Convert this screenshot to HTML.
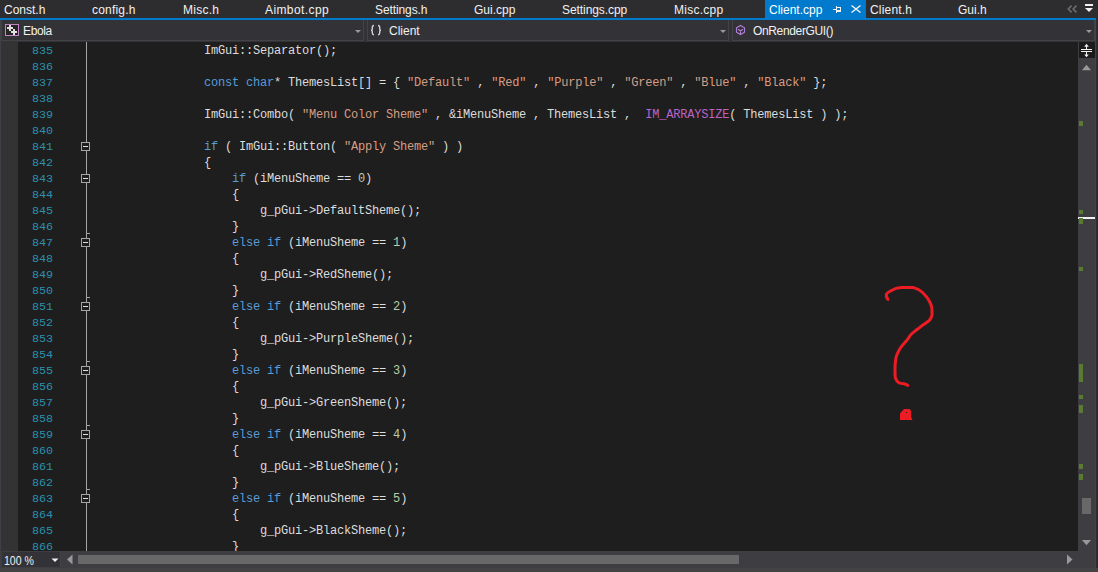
<!DOCTYPE html>
<html><head><meta charset="utf-8"><style>
*{margin:0;padding:0;box-sizing:border-box}
html,body{width:1098px;height:572px;overflow:hidden;background:#2d2d30}
body{position:relative;font-family:"Liberation Sans",sans-serif}
.a{position:absolute}
.tab{position:absolute;top:3px;font-size:12px;line-height:14px;color:#f1f1f1;white-space:pre}
.dd{position:absolute;top:20px;height:21px;background:#333337;border:1px solid #434346;border-top:none}
.ddt{position:absolute;top:4px;font-size:12px;line-height:14px;color:#f1f1f1;white-space:pre;letter-spacing:-0.35px}
.arr{position:absolute;width:0;height:0;border-left:3.5px solid transparent;border-right:3.5px solid transparent;border-top:3.5px solid #999}
#ed{position:absolute;left:0;top:42px;width:1078px;height:509px;background:#1e1e1e;overflow:hidden}
#gmg{position:absolute;left:0;top:0;width:18px;height:509px;background:#333333;border-left:1px solid #3f3f46}
.ln{position:absolute;left:0;height:16px;line-height:16px;font-family:"Liberation Mono",monospace;font-size:12px;letter-spacing:-0.2px;white-space:pre;color:#dcdcdc}
#code{position:absolute;left:92px;top:0}
#nums{position:absolute;left:32px;top:0;color:#2b91af}
#nums .ln{color:#2b91af;font-size:11.7px;letter-spacing:-0.02px}
#ovl{position:absolute;left:86px;top:0;width:1px;height:509px;background:#a5a5a5}
.ob{position:absolute;left:81px;width:9px;height:9px;border:1px solid #a5a5a5;background:#1e1e1e}
.ob::after{content:"";position:absolute;left:1px;top:3px;width:5px;height:1px;background:#e0e0e0}
.ot{position:absolute;left:86px;width:4px;height:1px;background:#a5a5a5}
#vs{position:absolute;left:1078px;top:42px;width:17px;height:509px;background:#3e3e42}
.gm{position:absolute;left:1px;width:4px;background:#597b31}
#hs{position:absolute;left:0;top:551px;width:1095px;height:17px;background:#3e3e42}
</style></head><body>
<div class="tab" style="left:4px;letter-spacing:0px">Const.h</div><div class="tab" style="left:92px;letter-spacing:0.2px">config.h</div><div class="tab" style="left:183px;letter-spacing:0.25px">Misc.h</div><div class="tab" style="left:265px;letter-spacing:0.4px">Aimbot.cpp</div><div class="tab" style="left:375px;letter-spacing:-0.1px">Settings.h</div><div class="tab" style="left:474px;letter-spacing:0px">Gui.cpp</div><div class="tab" style="left:562px;letter-spacing:-0.07px">Settings.cpp</div><div class="tab" style="left:674px;letter-spacing:0.25px">Misc.cpp</div><div class="tab" style="left:870px;letter-spacing:0.18px">Client.h</div><div class="tab" style="left:958px;letter-spacing:0px">Gui.h</div>
<div class="a" style="left:765px;top:0;width:101px;height:18px;background:#007acc"></div>
<div class="tab" style="left:769px;color:#fff">Client.cpp</div>
<svg class="a" style="left:0;top:0" width="1098" height="42">
 <g fill="#f1f1f1">
  <rect x="833" y="9" width="3" height="1"/><rect x="836" y="6" width="1" height="7"/>
  <rect x="837" y="7" width="4" height="1"/><rect x="837" y="10" width="4" height="2"/><rect x="840" y="7" width="1" height="4"/>
 </g>
 <path d="M851.5,5.5 L860.5,12.5 M860.5,5.5 L851.5,12.5" stroke="#f1f1f1" stroke-width="1.5"/>
 <path d="M1071.6,5.6 L1068.2,9 L1071.6,12.4 M1076.5,5.6 L1073.1,9 L1076.5,12.4" stroke="#6e6e6e" stroke-width="1.5" fill="none"/>
 <rect x="1085" y="4" width="8" height="2" fill="#f1f1f1"/>
 <path d="M1085,8 L1093,8 L1089,12 Z" fill="#f1f1f1"/>
</svg>
<div class="a" style="left:0;top:18px;width:1096px;height:2px;background:#007acc"></div>
<div class="a" style="left:0;top:20px;width:1096px;height:22px;background:#333337"></div>
<div class="dd" style="left:1px;width:363px"><div class="ddt" style="left:21px">Ebola</div><div class="arr" style="left:353px;top:10px"></div></div>
<div class="a" style="left:0;top:20px;width:1px;height:22px;background:#3f3f46"></div>
<div class="dd" style="left:367px;width:362px"><div class="ddt" style="left:21px;letter-spacing:0">Client</div><div class="arr" style="left:352px;top:10px"></div></div>
<div class="dd" style="left:732px;width:363px"><div class="ddt" style="left:20px">OnRenderGUI()</div><div class="arr" style="left:353px;top:10px"></div></div>
<div class="a" style="left:1095px;top:20px;width:1px;height:548px;background:#434346"></div>
<div class="a" style="left:0;top:568px;width:1098px;height:4px;background:#434346"></div>
<svg class="a" style="left:0;top:0" width="1098" height="42">
 <rect x="5.5" y="24.5" width="13" height="11" fill="#252526" stroke="#c586c8" stroke-width="1"/>
 <g fill="#e0e0e0">
  <rect x="9" y="25" width="2" height="6"/><rect x="7" y="27" width="6" height="2"/>
  <rect x="13" y="29" width="2" height="6"/><rect x="11" y="31" width="6" height="2"/>
 </g>
 <path d="M374,25.5 C372.5,25.5 372.3,26.5 372.3,27.5 L372.3,29 C372.3,29.8 371.8,30.2 371,30.2 C371.8,30.2 372.3,30.6 372.3,31.4 L372.3,33 C372.3,34 372.5,34.7 374,34.7 M378,25.5 C379.5,25.5 379.7,26.5 379.7,27.5 L379.7,29 C379.7,29.8 380.2,30.2 381,30.2 C380.2,30.2 379.7,30.6 379.7,31.4 L379.7,33 C379.7,34 379.5,34.7 378,34.7" stroke="#d0d0d0" stroke-width="1.4" fill="none"/>
 <g stroke="#b180d7" stroke-width="1.1" fill="none">
  <path d="M740.5,25.5 L744.5,27.8 L744.5,32.2 L740.5,34.5 L736.5,32.2 L736.5,27.8 Z"/>
  <path d="M738,29.3 L740.5,30.8 L743,29.3 M740.5,30.8 L740.5,34"/>
 </g>
</svg>
<div id="ed">
<div id="gmg"></div>
<div id="nums"><div class="ln" style="top:1px">835</div><div class="ln" style="top:17px">836</div><div class="ln" style="top:33px">837</div><div class="ln" style="top:49px">838</div><div class="ln" style="top:65px">839</div><div class="ln" style="top:81px">840</div><div class="ln" style="top:97px">841</div><div class="ln" style="top:113px">842</div><div class="ln" style="top:129px">843</div><div class="ln" style="top:145px">844</div><div class="ln" style="top:161px">845</div><div class="ln" style="top:177px">846</div><div class="ln" style="top:193px">847</div><div class="ln" style="top:209px">848</div><div class="ln" style="top:225px">849</div><div class="ln" style="top:241px">850</div><div class="ln" style="top:257px">851</div><div class="ln" style="top:273px">852</div><div class="ln" style="top:289px">853</div><div class="ln" style="top:305px">854</div><div class="ln" style="top:321px">855</div><div class="ln" style="top:337px">856</div><div class="ln" style="top:353px">857</div><div class="ln" style="top:369px">858</div><div class="ln" style="top:385px">859</div><div class="ln" style="top:401px">860</div><div class="ln" style="top:417px">861</div><div class="ln" style="top:433px">862</div><div class="ln" style="top:449px">863</div><div class="ln" style="top:465px">864</div><div class="ln" style="top:481px">865</div><div class="ln" style="top:497px">866</div></div>
<div id="ovl"></div>
<div><div class="ob" style="top:100px"></div><div class="ob" style="top:132px"></div><div class="ob" style="top:196px"></div><div class="ob" style="top:260px"></div><div class="ob" style="top:324px"></div><div class="ob" style="top:388px"></div><div class="ob" style="top:452px"></div><div class="ot" style="top:191px"></div><div class="ot" style="top:255px"></div><div class="ot" style="top:319px"></div><div class="ot" style="top:383px"></div><div class="ot" style="top:447px"></div></div>
<div id="code"><div class="ln" style="top:1px">                ImGui::Separator();</div><div class="ln" style="top:17px"></div><div class="ln" style="top:33px">                <span style="color:#569cd6">const</span> <span style="color:#569cd6">char</span>* ThemesList[] = { <span style="color:#d69d85">"Default"</span> , <span style="color:#d69d85">"Red"</span> , <span style="color:#d69d85">"Purple"</span> , <span style="color:#d69d85">"Green"</span> , <span style="color:#d69d85">"Blue"</span> , <span style="color:#d69d85">"Black"</span> };</div><div class="ln" style="top:49px"></div><div class="ln" style="top:65px">                ImGui::Combo( <span style="color:#d69d85">"Menu Color Sheme"</span> , &amp;iMenuSheme , ThemesList ,  <span style="color:#bd63c5">IM_ARRAYSIZE</span>( ThemesList ) );</div><div class="ln" style="top:81px"></div><div class="ln" style="top:97px">                <span style="color:#569cd6">if</span> ( ImGui::Button( <span style="color:#d69d85">"Apply Sheme"</span> ) )</div><div class="ln" style="top:113px">                {</div><div class="ln" style="top:129px">                    <span style="color:#569cd6">if</span> (iMenuSheme == <span style="color:#b5cea8">0</span>)</div><div class="ln" style="top:145px">                    {</div><div class="ln" style="top:161px">                        g_pGui-&gt;DefaultSheme();</div><div class="ln" style="top:177px">                    }</div><div class="ln" style="top:193px">                    <span style="color:#569cd6">else</span> <span style="color:#569cd6">if</span> (iMenuSheme == <span style="color:#b5cea8">1</span>)</div><div class="ln" style="top:209px">                    {</div><div class="ln" style="top:225px">                        g_pGui-&gt;RedSheme();</div><div class="ln" style="top:241px">                    }</div><div class="ln" style="top:257px">                    <span style="color:#569cd6">else</span> <span style="color:#569cd6">if</span> (iMenuSheme == <span style="color:#b5cea8">2</span>)</div><div class="ln" style="top:273px">                    {</div><div class="ln" style="top:289px">                        g_pGui-&gt;PurpleSheme();</div><div class="ln" style="top:305px">                    }</div><div class="ln" style="top:321px">                    <span style="color:#569cd6">else</span> <span style="color:#569cd6">if</span> (iMenuSheme == <span style="color:#b5cea8">3</span>)</div><div class="ln" style="top:337px">                    {</div><div class="ln" style="top:353px">                        g_pGui-&gt;GreenSheme();</div><div class="ln" style="top:369px">                    }</div><div class="ln" style="top:385px">                    <span style="color:#569cd6">else</span> <span style="color:#569cd6">if</span> (iMenuSheme == <span style="color:#b5cea8">4</span>)</div><div class="ln" style="top:401px">                    {</div><div class="ln" style="top:417px">                        g_pGui-&gt;BlueSheme();</div><div class="ln" style="top:433px">                    }</div><div class="ln" style="top:449px">                    <span style="color:#569cd6">else</span> <span style="color:#569cd6">if</span> (iMenuSheme == <span style="color:#b5cea8">5</span>)</div><div class="ln" style="top:465px">                    {</div><div class="ln" style="top:481px">                        g_pGui-&gt;BlackSheme();</div><div class="ln" style="top:497px">                    }</div></div>
<svg class="a" style="left:0;top:-42px" width="1078" height="600">
 <path transform="translate(0,0.5)" d="M888,298.8 C886.5,297.5 886,296 886.5,293.5 C887.5,292 889,291.2 890.5,290.5 C893,289 897,287.2 901,287.1 L913.6,287.1 C917,288 920,289.5 922,291.5 C925,294.5 927,296.5 928.3,298.9 C930.5,302.5 932,305 932,309 L932,314.6 C931.5,317 930.5,318.5 929.3,319.9 C927,322 924.5,323.5 922,325.1 C920,326.8 918.5,328 916.7,329.3 C914.8,330.8 913,332 911.5,333.5 C910,335 908.7,337.3 907.4,339.1 C905,342 902,345 899.9,348.3 C897.8,352 896.3,355 895.8,358.2 C895.2,362 895,365 895,368.2 C895,372 895,375 895.3,377.3 C896,379.5 897.5,381.5 899.1,382.3 C901,383 903,383.2 904.9,383.5 L907.9,384.8" stroke="#ed1c24" stroke-width="3" fill="none" stroke-linecap="round" stroke-linejoin="round"/>
 <path d="M900,413.5 L904,409 L909.5,409 L911.2,411 L911.2,417.5 L912.2,419 L912.2,420 L900,420 Z" fill="#ed1c24"/>
 <rect x="906" y="412" width="1" height="1" fill="#1e1e1e"/>
</svg>
</div>
<div id="vs">
 <div class="a" style="left:1px;top:0;width:16px;height:16px;background:#1b1b1c"></div>
 <div class="a" style="left:0;top:175px;width:17px;height:2px;background:#f1f1f1"></div>
<div class="gm" style="top:79px;height:5px"></div><div class="gm" style="top:168px;height:4px"></div><div class="gm" style="top:176px;height:6px"></div><div class="gm" style="top:225px;height:4px"></div><div class="gm" style="top:322px;height:18px"></div><div class="gm" style="top:353px;height:4px"></div><div class="gm" style="top:363px;height:8px"></div><div class="gm" style="top:422px;height:5px"></div><div class="gm" style="top:432px;height:6px"></div>
 <div class="a" style="left:4px;top:456px;width:9px;height:16px;background:#686868"></div>
 <svg class="a" style="left:0;top:0" width="18" height="509">
  <g fill="#f1f1f1">
   <rect x="3" y="7" width="11" height="1"/><rect x="3" y="9" width="11" height="1"/>
   <rect x="8" y="4" width="1" height="3"/><rect x="8" y="10" width="1" height="3.5"/>
   <path d="M8.5,1.8 L10.8,4.8 L6.2,4.8 Z"/><path d="M8.5,15.2 L10.8,12.5 L6.2,12.5 Z"/>
  </g>
  <path d="M4,28.2 L13,28.2 L8.5,22.8 Z" fill="#999"/>
  <path d="M4,498 L13,498 L8.5,503.2 Z" fill="#999"/>
 </svg>
</div>
<div id="hs">
 <div class="a" style="left:2px;top:1px;width:59px;height:15px;background:#333337;border-right:1px solid #434346"></div>
 <div class="a" style="left:4px;top:3px;font-size:12px;line-height:14px;transform:scaleX(0.88);transform-origin:0 0;color:#f1f1f1;white-space:pre">100 %</div>
 <svg class="a" style="left:0;top:0" width="1096" height="17">
  <path d="M51.5,7.5 L58.5,7.5 L55,11 Z" fill="#f1f1f1"/>
  <path d="M72.5,3.5 L72.5,13.5 L67,8.5 Z" fill="#999"/>
  <path d="M1067,3.5 L1067,13.5 L1072.5,8.5 Z" fill="#999"/>
 </svg>
 <div class="a" style="left:78px;top:4px;width:661px;height:9px;background:#686868"></div>
</div>
</body></html>
